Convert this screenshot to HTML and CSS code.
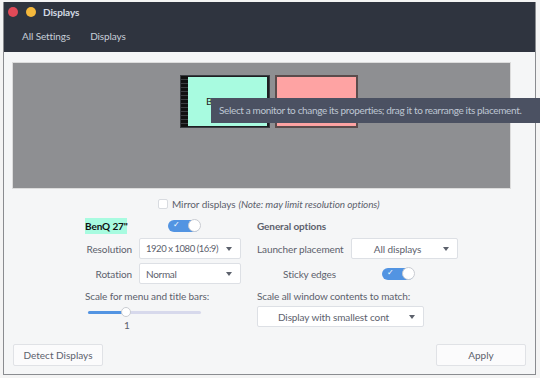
FILE: index.html
```html
<!DOCTYPE html>
<html lang="en">
<head>
    <meta charset="UTF-8">
    <title>Displays</title>
    <link rel="stylesheet" href="styles.css">
</head>
<body>
    <div class="window">
        <!-- Header bar -->
        <div class="header">
            <div class="titlebar">
                <span class="dot red"></span>
                <span class="dot yellow"></span>
                <span class="title">Displays</span>
            </div>
            <div class="tabs">
                <span>All Settings</span>
                <span>Displays</span>
            </div>
        </div>

        <div class="content">
            <!-- Monitor arrangement -->
            <div class="preview">
                <div class="monitor benq">
                    <span class="edge"></span>
                    <span class="screen">B</span>
                </div>
                <div class="monitor other">
                    <span class="screen"></span>
                </div>
                <div class="tooltip">Select a monitor to change its properties; drag it to rearrange its placement.</div>
            </div>

            <div class="mirror">
                <span class="check"></span>
                <span>Mirror displays</span>
                <em>(Note: may limit resolution options)</em>
            </div>

            <div class="settings">
                <div class="col left">
                    <div class="row first">
                        <span class="name">BenQ 27"</span>
                        <span class="switch"><span class="tick">&#10003;</span><span class="knob"></span></span>
                    </div>
                    <div class="row">
                        <span class="lbl">Resolution</span>
                        <span class="combo w102 res">1920 x 1080 (16:9)<span class="arrow"></span></span>
                    </div>
                    <div class="row">
                        <span class="lbl">Rotation</span>
                        <span class="combo w102">Normal<span class="arrow"></span></span>
                    </div>
                    <div class="row short">Scale for menu and title bars:</div>
                    <div class="slider">
                        <div class="track"><div class="fill"></div><div class="handle"></div></div>
                        <div class="value">1</div>
                    </div>
                </div>

                <div class="col right">
                    <div class="row first"><b class="heading">General options</b></div>
                    <div class="row">
                        <span class="lbl wide">Launcher placement</span>
                        <span class="combo w107 center">All displays<span class="arrow"></span></span>
                    </div>
                    <div class="row">
                        <span class="lbl wide sticky">Sticky edges</span>
                        <span class="switch"><span class="tick">&#10003;</span><span class="knob"></span></span>
                    </div>
                    <div class="row short">Scale all window contents to match:</div>
                    <div class="row">
                        <span class="combo w167 center">Display with smallest cont<span class="arrow"></span></span>
                    </div>
                </div>
            </div>

            <div class="footer">
                <button>Detect Displays</button>
                <button>Apply</button>
            </div>
        </div>
    </div>
</body>
</html>
```

FILE: styles.css
```css
body {
    margin: 0;
    background: #f4f4f4;
    font-family: Lato, "Noto Sans", sans-serif;
    font-size: 10px;
    letter-spacing: -0.1px;
    color: #5c616c;
    white-space: nowrap;
    overflow: hidden;
}
.window {
    margin: 2px 3px 0 3px;
    width: 533px;
    height: 373px;
    border: 1px solid #8a8c90;
    border-top: none;
    background: #f5f6f7;
    display: flex;
    flex-direction: column;
    box-sizing: border-box;
}
.header {
    background: #2f343f;
    height: 50px;
}
.titlebar {
    height: 20px;
    display: flex;
    align-items: center;
    padding-left: 4px;
}
.dot {
    width: 10px;
    height: 10px;
    border-radius: 50%;
    margin-right: 8px;
}
.red { background: #e14a58; }
.yellow { background: #f4b83c; }
.title {
    color: #d3dae3;
    font-weight: bold;
    font-size: 10px;
    margin-left: -1px;
}
.tabs {
    height: 28px;
    display: flex;
    align-items: center;
    padding-left: 18px;
    gap: 20px;
    color: #c7ced8;
    font-size: 10px;
}
.content {
    flex: 1;
    padding: 11px 0 0 9px;
    position: relative;
}
.preview {
    width: 497px;
    height: 125px;
    background: #8e8f92;
    border: 1px solid #dcdcdc;
    margin-left: -1px;
    margin-top: -1px;
    position: relative;
}
.monitor {
    position: absolute;
    top: 12px;
    height: 51px;
    display: flex;
    border: 1px solid #3a3d42;
    background: #1e1f22;
}
.benq { left: 167px; width: 88px; }
.other { left: 262px; width: 81px; border-color: #5a4c4c; background: #5a4c4c; }
.benq .edge {
    width: 7px;
    background: repeating-linear-gradient(#111 0 3px, #3b3d40 3px 4px);
}
.benq .screen {
    background: #a8fbe0;
    width: 79px;
    margin: 1px 1px 1px 0;
    padding: 18px 0 0 18px;
    box-sizing: border-box;
    color: #222;
}
.other .screen {
    background: #fea3a3;
    width: 79px;
    margin: 1px;
}
.tooltip {
    position: absolute;
    left: 198px;
    top: 35px;
    height: 25px;
    line-height: 25px;
    padding: 0 30px 0 8px;
    background: #4b5162;
    color: #bec6d2;
    letter-spacing: -0.35px;
}
.mirror {
    height: 15px;
    margin-top: 7px;
    display: flex;
    align-items: center;
    padding-left: 145px;
    gap: 3px;
}
.check {
    width: 8px;
    height: 8px;
    border: 1px solid #d8dbe0;
    background: #fff;
    border-radius: 2px;
    margin-right: 1px;
}
.mirror em {
    font-style: italic;
}
.settings {
    display: flex;
    margin-top: 6px;
    padding-left: 72px;
}
.col {
    display: flex;
    flex-direction: column;
}
.left { width: 172px; }
.row {
    height: 21px;
    margin-bottom: 4px;
    display: flex;
    align-items: center;
}
.row.first {
    height: 18px;
    margin-bottom: 3px;
}
.row.short {
    height: 15px;
    margin-bottom: 3px;
}
.name {
    background: #a8fbe0;
    color: #111;
    font-weight: bold;
    height: 16px;
    line-height: 16px;
    width: 42px;
    margin-right: 41px;
}
.switch {
    width: 32px;
    height: 12px;
    border-radius: 6px;
    background: #5294e2;
    position: relative;
    display: inline-block;
}
.tick {
    position: absolute;
    left: 5px;
    top: -1px;
    font-size: 8px;
    color: #fff;
}
.knob {
    position: absolute;
    right: -1px;
    top: -1px;
    width: 13px;
    height: 13px;
    border-radius: 50%;
    background: #fff;
    border: 1px solid #c9ccd2;
    box-sizing: border-box;
}
.lbl {
    width: 47px;
    text-align: right;
    margin-right: 7px;
}
.combo {
    height: 21px;
    box-sizing: border-box;
    border: 1px solid #dde0e5;
    border-radius: 2px;
    background: #fff;
    padding: 0 0 0 6px;
    display: flex;
    align-items: center;
    position: relative;
    letter-spacing: -0.3px;
}
.combo.res {
    font-size: 9.5px;
    letter-spacing: -0.45px;
}
.combo.center { justify-content: center; padding: 0 14px 0 0; letter-spacing: -0.1px; }
.w102 { width: 102px; }
.w107 { width: 107px; }
.w167 { width: 167px; }
.arrow {
    position: absolute;
    right: 8px;
    top: 8px;
    border-left: 3.5px solid transparent;
    border-right: 3.5px solid transparent;
    border-top: 4px solid #5c616c;
}
.slider {
    padding-left: 3px;
}
.track {
    position: relative;
    width: 113px;
    height: 3px;
    border-radius: 2px;
    background: #d7d9ec;
    margin-top: 5px;
}
.fill {
    width: 38px;
    height: 3px;
    border-radius: 2px;
    background: #5294e2;
}
.handle {
    position: absolute;
    left: 33px;
    top: -4px;
    width: 10px;
    height: 10px;
    border-radius: 50%;
    background: #fff;
    border: 1px solid #c9ccd2;
    box-sizing: border-box;
}
.value {
    margin: 5px 0 0 36px;
}
.heading { color: #5c616c; }
.right .lbl.wide {
    text-align: left;
    margin-right: 0;
    width: 94px;
}
.right .lbl.sticky {
    text-align: right;
    width: 79px;
    margin-right: 46px;
}
.footer {
    position: absolute;
    left: 9px;
    right: 9px;
    bottom: 8px;
    display: flex;
    justify-content: space-between;
}
.footer button {
    width: 90px;
    height: 22px;
    background: #fbfbfc;
    border: 1px solid #e0e2e6;
    border-radius: 2px;
    font-family: inherit;
    font-size: 10px;
    color: #5c616c;
}
```
